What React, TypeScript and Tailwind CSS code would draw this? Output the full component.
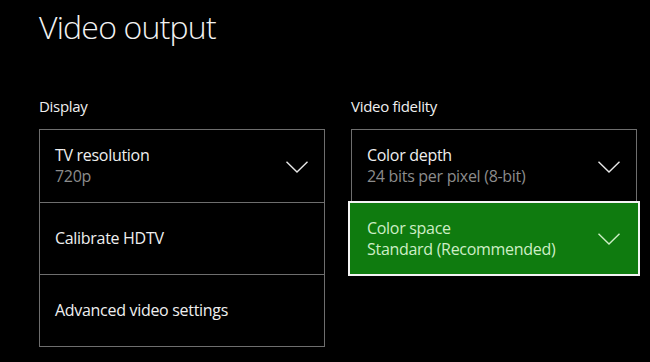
import React from "react";

type Row = { title: string; value?: string; dropdown?: boolean; focused?: boolean };

const display: Row[] = [
  { title: "TV resolution", value: "720p", dropdown: true },
  { title: "Calibrate HDTV" },
  { title: "Advanced video settings" },
];

const fidelity: Row[] = [
  { title: "Color depth", value: "24 bits per pixel (8-bit)", dropdown: true },
  { title: "Color space", value: "Standard (Recommended)", dropdown: true, focused: true },
];

function Chevron({ className }: { className?: string }) {
  return (
    <svg className={className} width="22" height="12" viewBox="0 0 22 12" fill="none" stroke="currentColor" strokeWidth={1.4} aria-hidden="true">
      <path d="M0.5 0.7 11 11 21.5 0.7" />
    </svg>
  );
}

function SettingRow({ row, first }: { row: Row; first: boolean }) {
  return (
    <div className={`relative h-[72px] ${first ? "" : "border-t border-[#6e6e6e]"}`}>
      {row.focused && (
        <div className="absolute -left-[4px] -right-[4px] -top-[2px] -bottom-[2px] border-2 border-[#f4f4f4] bg-[#0f7b0f]" />
      )}
      <div className="relative flex h-full items-center justify-between pl-[15px] pr-[16px]">
        <div className="flex flex-col text-[16px] leading-[21px] tracking-[-0.3px]">
          <span className={row.focused ? "text-[#cdeec6]" : "text-[#efefef]"}>{row.title}</span>
          {row.value && (
            <span className={row.focused ? "text-[#cdeec6]" : "text-[#8c8c8c]"}>{row.value}</span>
          )}
        </div>
        {row.dropdown && (
          <Chevron className={`mt-[1px] ${row.focused ? "text-[#cdeec6]" : "text-[#e8e8e8]"}`} />
        )}
      </div>
    </div>
  );
}

function Group({ label, rows }: { label: string; rows: Row[] }) {
  return (
    <div className="w-[286px]">
      <div className="text-[15px] leading-[20px] tracking-[-0.3px] text-[#efefef] mb-[13px]">{label}</div>
      <div className="border border-[#6e6e6e]">
        {rows.map((r, i) => (
          <SettingRow key={r.title} row={r} first={i === 0} />
        ))}
      </div>
    </div>
  );
}

export default function App() {
  return (
    <div
      className="w-[650px] h-[362px] overflow-hidden bg-black pl-[39px] pt-[5px]"
      style={{ fontFamily: '"Open Sans", "Noto Sans", sans-serif' }}
    >
      <h1 className="text-[32px] leading-[44px] font-light text-[#f2f2f2] tracking-[-0.8px]">Video output</h1>
      <div className="mt-[47px] flex gap-[26px]">
        <Group label="Display" rows={display} />
        <Group label="Video fidelity" rows={fidelity} />
      </div>
    </div>
  );
}
